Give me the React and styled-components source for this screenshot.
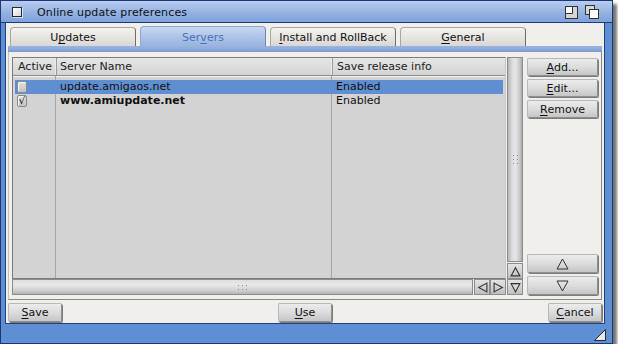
import React from 'react';
import styled, { createGlobalStyle } from 'styled-components';

const Global = createGlobalStyle`
  html, body { margin: 0; padding: 0; background: #ffffff; }
  body { font-family: "DejaVu Sans", "Liberation Sans", sans-serif; font-size: 11px; color: #111; }
  * { box-sizing: border-box; }
`;

const Window = styled.div`
  width: 613px;
  height: 344px;
  background: #5e8fd2;
  border: 1px solid #1d3674;
  display: flex;
  flex-direction: column;
  box-shadow: 4px 4px 3px rgba(0, 0, 0, 0.55);
`;

const TitleBar = styled.div`
  height: 22px;
  flex: none;
  display: flex;
  align-items: center;
  padding: 1px 13px 0 11px;
  background: linear-gradient(to bottom, #b9cdee 0%, #93b2e3 55%, #7ea2dc 100%);
  border-bottom: 1px solid #1f3a78;
`;

const CloseBox = styled.div`
  width: 10px;
  height: 10px;
  border: 1px solid #2a2a2a;
  background: linear-gradient(135deg, #ffffff, #d8d8d8);
  box-shadow: 1px 1px 0 rgba(255,255,255,0.6);
`;

const Title = styled.div`
  margin-left: 15px;
  flex: 1;
  font-size: 11px;
  color: #111;
  letter-spacing: 0.15px;
`;

const Gadgets = styled.div`
  display: flex;
  gap: 7px;
  align-items: center;
`;

const Content = styled.div`
  flex: 1;
  margin: 0 7px 0 4px;
  border: 1px solid #23407e;
  border-top: none;
  background: #f1efeb;
  display: flex;
  flex-direction: column;
  padding: 4px 2px 1px 2px;
  min-height: 0;
`;

const BottomBar = styled.div`
  height: 19px;
  flex: none;
  display: flex;
  justify-content: flex-end;
  align-items: flex-end;
  padding: 0 6px 2px 0;
`;

const TabRow = styled.div`
  display: flex;
  gap: 4px;
  padding-left: 2px;
  height: 19px;
  flex: none;
  align-items: flex-end;
`;

const Tab = styled.div`
  width: 126px;
  height: ${p => (p.$active ? '20px' : '19px')};
  display: flex;
  align-items: center;
  justify-content: center;
  border: 1px solid ${p => (p.$active ? '#8ea8d2' : '#aaa7a0')};
  border-right-color: ${p => (p.$active ? '#6d86b4' : '#6f6c66')};
  border-bottom: none;
  border-radius: 4px 4px 0 0;
  background: ${p =>
    p.$active
      ? 'linear-gradient(to bottom, #c8d8f0 0%, #a9c1e6 60%, #98b4e0 100%)'
      : 'linear-gradient(to bottom, #f4f2ee 0%, #e4e2de 60%, #d9d7d3 100%)'};
  color: ${p => (p.$active ? '#4a72bc' : '#111')};
  font-size: 11px;
  padding-top: 1px;
`;

const U = styled.span`
  text-decoration: underline;
  text-underline-offset: 2px;
`;

const Panel = styled.div`
  flex: 1;
  display: flex;
  flex-direction: column;
  min-height: 0;
`;

const PanelBand = styled.div`
  height: 6px;
  flex: none;
  background: linear-gradient(to bottom, #9ab4de 0%, #86a5d8 70%, #7897cc 100%);
`;

const PanelBody = styled.div`
  flex: 1;
  display: flex;
  gap: 4px;
  padding: 5px 3px 4px 3px;
  border: 1px solid #c4c1bb;
  border-top: none;
  border-right-color: #8c8984;
  border-bottom-color: #8c8984;
  min-height: 0;
`;

const ListGrid = styled.div`
  flex: 1;
  display: grid;
  grid-template-columns: 1fr 17px;
  grid-template-rows: 1fr 16px;
`;

const List = styled.div`
  border: 1px solid #7c7c7c;
  border-right-color: #c8c8c8;
  background: #d3d3d3;
  display: flex;
  flex-direction: column;
  min-height: 0;
`;

const HeaderRow = styled.div`
  display: grid;
  grid-template-columns: 44px 276px 1fr;
  height: 18px;
  background: linear-gradient(to bottom, #e6e6e6, #d4d4d4);
  border-bottom: 1px solid #8a8a8a;
  box-shadow: 0 1px 0 #f4f4f4;
`;

const HeaderCell = styled.div`
  display: flex;
  align-items: center;
  padding-left: ${p => p.$pad || 4}px;
  border-right: ${p => (p.$last ? 'none' : '1px solid #9c9c9c')};
  box-shadow: ${p => (p.$last ? 'none' : 'inset -1px 0 0 #ececec')};
  color: #222;
  font-size: 11px;
`;

const Body = styled.div`
  flex: 1;
  padding: 4px 2px 0 2px;
  background-image:
    linear-gradient(#a6a6a6, #a6a6a6),
    linear-gradient(#a6a6a6, #a6a6a6);
  background-size: 1px 100%, 1px 100%;
  background-position: 42px 0, 318px 0;
  background-repeat: no-repeat;
`;

const Row = styled.div`
  display: grid;
  grid-template-columns: 42px 276px 1fr;
  height: 14px;
  background: ${p => (p.$selected ? '#5f8fd1' : 'transparent')};
`;

const Cell = styled.div`
  display: flex;
  align-items: center;
  padding-left: ${p => p.$pad || 2}px;
  font-size: 11px;
  font-weight: ${p => (p.$bold ? 'bold' : 'normal')};
  color: #111;
  white-space: nowrap;
  overflow: hidden;
  line-height: 14px;
`;

const Check = styled.div`
  width: 10px;
  height: 12px;
  border: 1px solid #8a8a8a;
  border-radius: 2px;
  background: linear-gradient(to bottom, #e2e2e2, #c2c2c2);
  box-shadow: inset 1px 1px 0 #f4f4f4;
  display: flex;
  align-items: center;
  justify-content: center;
  font-size: 10px;
  line-height: 10px;
  color: #111;
`;

const VCol = styled.div`
  display: flex;
  flex-direction: column;
  padding-left: 1px;
`;

const VTrack = styled.div`
  flex: 1;
  border: 1px solid #8c8c8c;
  background: linear-gradient(to right, #b4b4b4 0%, #dedede 30%, #e6e6e6 55%, #c6c6c6 85%, #a8a8a8 100%);
  display: flex;
  align-items: center;
  justify-content: center;
  margin-bottom: 1px;
`;

const HRow = styled.div`
  display: flex;
`;

const HTrack = styled.div`
  flex: 1;
  border: 1px solid #8c8c8c;
  background: linear-gradient(to bottom, #dedede 0%, #e8e8e8 35%, #cfcfcf 75%, #b4b4b4 100%);
  display: flex;
  align-items: center;
  justify-content: center;
  margin-right: 1px;
`;

const ArrowBtn = styled.div`
  width: ${p => p.$w || 16}px;
  height: ${p => p.$h || 16}px;
  flex: none;
  border: 1px solid #8c8c8c;
  background: linear-gradient(to bottom, #e4e4e4, #c0c0c0);
  display: flex;
  align-items: center;
  justify-content: center;
  margin-left: ${p => p.$ml || 0}px;
`;

const ButtonCol = styled.div`
  width: 71px;
  display: flex;
  flex-direction: column;
  gap: 3px;
  padding-top: 1px;
`;

const Spacer = styled.div`
  flex: 1;
`;

const Button = styled.div`
  height: ${p => p.$h || 18}px;
  width: ${p => (p.$w ? `${p.$w}px` : 'auto')};
  border: 1px solid #8e8e8e;
  border-top-color: #b8b8b8;
  border-left-color: #b8b8b8;
  border-radius: 2px;
  background: linear-gradient(to bottom, #ececec 0%, #dcdcdc 50%, #c6c6c6 100%);
  box-shadow: 1px 1px 0 #7c7c7c;
  display: flex;
  align-items: center;
  justify-content: center;
  font-size: 11px;
  color: #111;
`;

const Footer = styled.div`
  display: flex;
  justify-content: space-between;
  align-items: center;
  margin-top: 3px;
  flex: none;
`;

const Triangle = ({ dir }) => {
  const pts = {
    up: '5,1.5 9,9 1,9',
    down: '1,1.5 9,1.5 5,9',
    left: '9,1 9,9 1.5,5',
    right: '1,1 1,9 8.5,5',
  }[dir];
  return (
    <svg width="11" height="11" viewBox="0 0 10 10">
      <polygon points={pts} fill="none" stroke="#333" strokeWidth="1" />
    </svg>
  );
};

const BigTriangle = ({ dir }) => (
  <svg width="13" height="12" viewBox="0 0 13 12">
    <polygon
      points={dir === 'up' ? '6.5,1 12,11 1,11' : '1,1 12,1 6.5,11'}
      fill="none"
      stroke="#333"
      strokeWidth="1"
    />
  </svg>
);

const Grip = ({ vertical }) => (
  <svg width={vertical ? 7 : 11} height={vertical ? 11 : 7} viewBox={vertical ? '0 0 7 11' : '0 0 11 7'}>
    {(vertical
      ? [[1, 1], [5, 1], [1, 5], [5, 5], [1, 9], [5, 9]]
      : [[1, 1], [5, 1], [9, 1], [1, 5], [5, 5], [9, 5]]
    ).map(([x, y], i) => (
      <rect key={i} x={x} y={y} width="1" height="1" fill="#8a8a8a" />
    ))}
  </svg>
);

const ZoomGadget = () => (
  <svg width="13" height="13" viewBox="0 0 13 13">
    <rect x="0.5" y="0.5" width="12" height="12" fill="#d6d6d6" stroke="#333" />
    <rect x="1" y="1" width="6" height="6" fill="#ffffff" />
    <path d="M7.5 1 V7.5 H1" fill="none" stroke="#333" />
  </svg>
);

const DepthGadget = () => (
  <svg width="14" height="14" viewBox="0 0 14 14">
    <rect x="0.5" y="0.5" width="9" height="9" fill="#d6d6d6" stroke="#333" />
    <rect x="4.5" y="4.5" width="9" height="9" fill="#ffffff" stroke="#333" />
  </svg>
);

const ResizeGrip = () => (
  <svg width="12" height="12" viewBox="0 0 12 12">
    <polygon points="11.5,0.5 11.5,11.5 0.5,11.5" fill="#e8e8e8" stroke="#2a2a2a" />
  </svg>
);

const servers = [
  { active: false, name: 'update.amigaos.net', info: 'Enabled', selected: true, bold: false },
  { active: true, name: 'www.amiupdate.net', info: 'Enabled', selected: false, bold: true },
];

export default function App() {
  return (
    <>
      <Global />
      <Window>
        <TitleBar>
          <CloseBox />
          <Title>Online update preferences</Title>
          <Gadgets>
            <ZoomGadget />
            <DepthGadget />
          </Gadgets>
        </TitleBar>
        <Content>
          <TabRow>
            <Tab>U<U>p</U>dates</Tab>
            <Tab $active>Ser<U>v</U>ers</Tab>
            <Tab><U>I</U>nstall and RollBack</Tab>
            <Tab><U>G</U>eneral</Tab>
          </TabRow>
          <Panel>
            <PanelBand />
            <PanelBody>
              <ListGrid>
                <List>
                  <HeaderRow>
                    <HeaderCell $pad={5}>Active</HeaderCell>
                    <HeaderCell $pad={3}>Server Name</HeaderCell>
                    <HeaderCell $pad={4} $last>Save release info</HeaderCell>
                  </HeaderRow>
                  <Body>
                    {servers.map((s) => (
                      <Row key={s.name} $selected={s.selected}>
                        <Cell $pad={2}>
                          <Check>{s.active ? '√' : ''}</Check>
                        </Cell>
                        <Cell $pad={3} $bold={s.bold}>{s.name}</Cell>
                        <Cell $pad={3}>{s.info}</Cell>
                      </Row>
                    ))}
                  </Body>
                </List>
                <VCol>
                  <VTrack>
                    <Grip vertical />
                  </VTrack>
                  <ArrowBtn $h={16}><Triangle dir="up" /></ArrowBtn>
                </VCol>
                <HRow>
                  <HTrack>
                    <Grip />
                  </HTrack>
                  <ArrowBtn><Triangle dir="left" /></ArrowBtn>
                  <ArrowBtn><Triangle dir="right" /></ArrowBtn>
                </HRow>
                <ArrowBtn $w={16} $ml={1}><Triangle dir="down" /></ArrowBtn>
              </ListGrid>
              <ButtonCol>
                <Button><U>A</U>dd...</Button>
                <Button><U>E</U>dit...</Button>
                <Button><U>R</U>emove</Button>
                <Spacer />
                <Button $h={19}><BigTriangle dir="up" /></Button>
                <Button $h={19}><BigTriangle dir="down" /></Button>
              </ButtonCol>
            </PanelBody>
          </Panel>
          <Footer>
            <Button $w={54} $h={19}><U>S</U>ave</Button>
            <Button $w={54} $h={19}><U>U</U>se</Button>
            <Button $w={54} $h={19}><U>C</U>ancel</Button>
          </Footer>
        </Content>
        <BottomBar>
          <ResizeGrip />
        </BottomBar>
      </Window>
    </>
  );
}
